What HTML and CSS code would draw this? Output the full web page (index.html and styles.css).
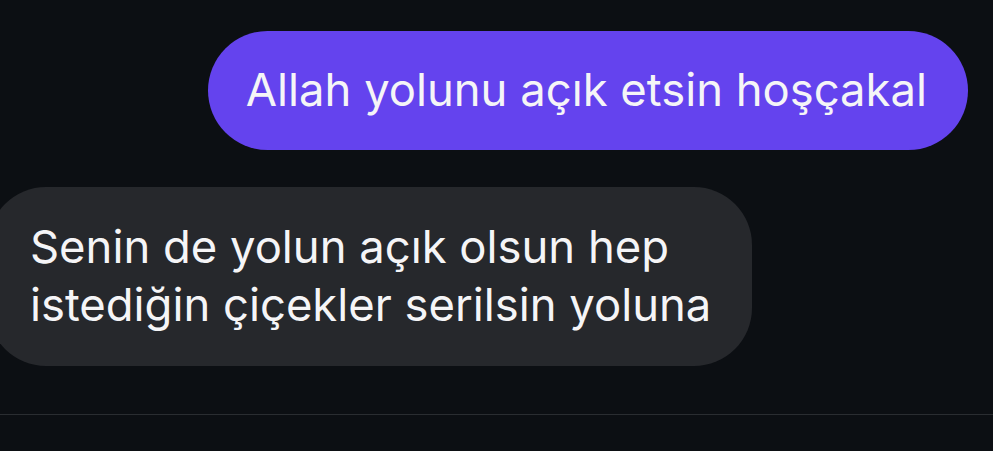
FILE: index.html
```html
<!DOCTYPE html>
<html lang="tr">
<head>
<meta charset="utf-8">
<link rel="stylesheet" href="styles.css">
</head>
<body>
<div class="chat">
  <div class="row row-out">
    <div class="bubble bubble-out">Allah yolunu açık etsin hoşçakal</div>
  </div>
  <div class="row row-in">
    <div class="bubble bubble-in">Senin de yolun açık olsun hep<br>istediğin çiçekler serilsin yoluna</div>
  </div>
</div>
<div class="divider"></div>
</body>
</html>
```
FILE: styles.css
```css
html, body {
  margin: 0;
  padding: 0;
  background: #0c0f13;
  height: 100%;
  overflow: hidden;
}
body {
  font-family: Inter, "Noto Sans", sans-serif;
  color: #f5f5f7;
}
.chat {
  display: flex;
  flex-direction: column;
  gap: 37px;
  padding-top: 31px;
}
.row {
  display: flex;
}
.row-out {
  justify-content: flex-end;
  padding-right: 25px;
}
.row-in {
  justify-content: flex-start;
  margin-left: -12px;
}
.bubble {
  font-size: 45.4px;
  line-height: 58px;
  white-space: nowrap;
}
.bubble-out {
  background: #6443ee;
  border-radius: 60px;
  padding: 30px 41px 31px 38px;
}
.bubble-in {
  background: #26282c;
  border-radius: 58px;
  padding: 31px 41px 32px 42px;
}
.divider {
  height: 1px;
  background: #2a2d31;
  margin-top: 48px;
}
```
